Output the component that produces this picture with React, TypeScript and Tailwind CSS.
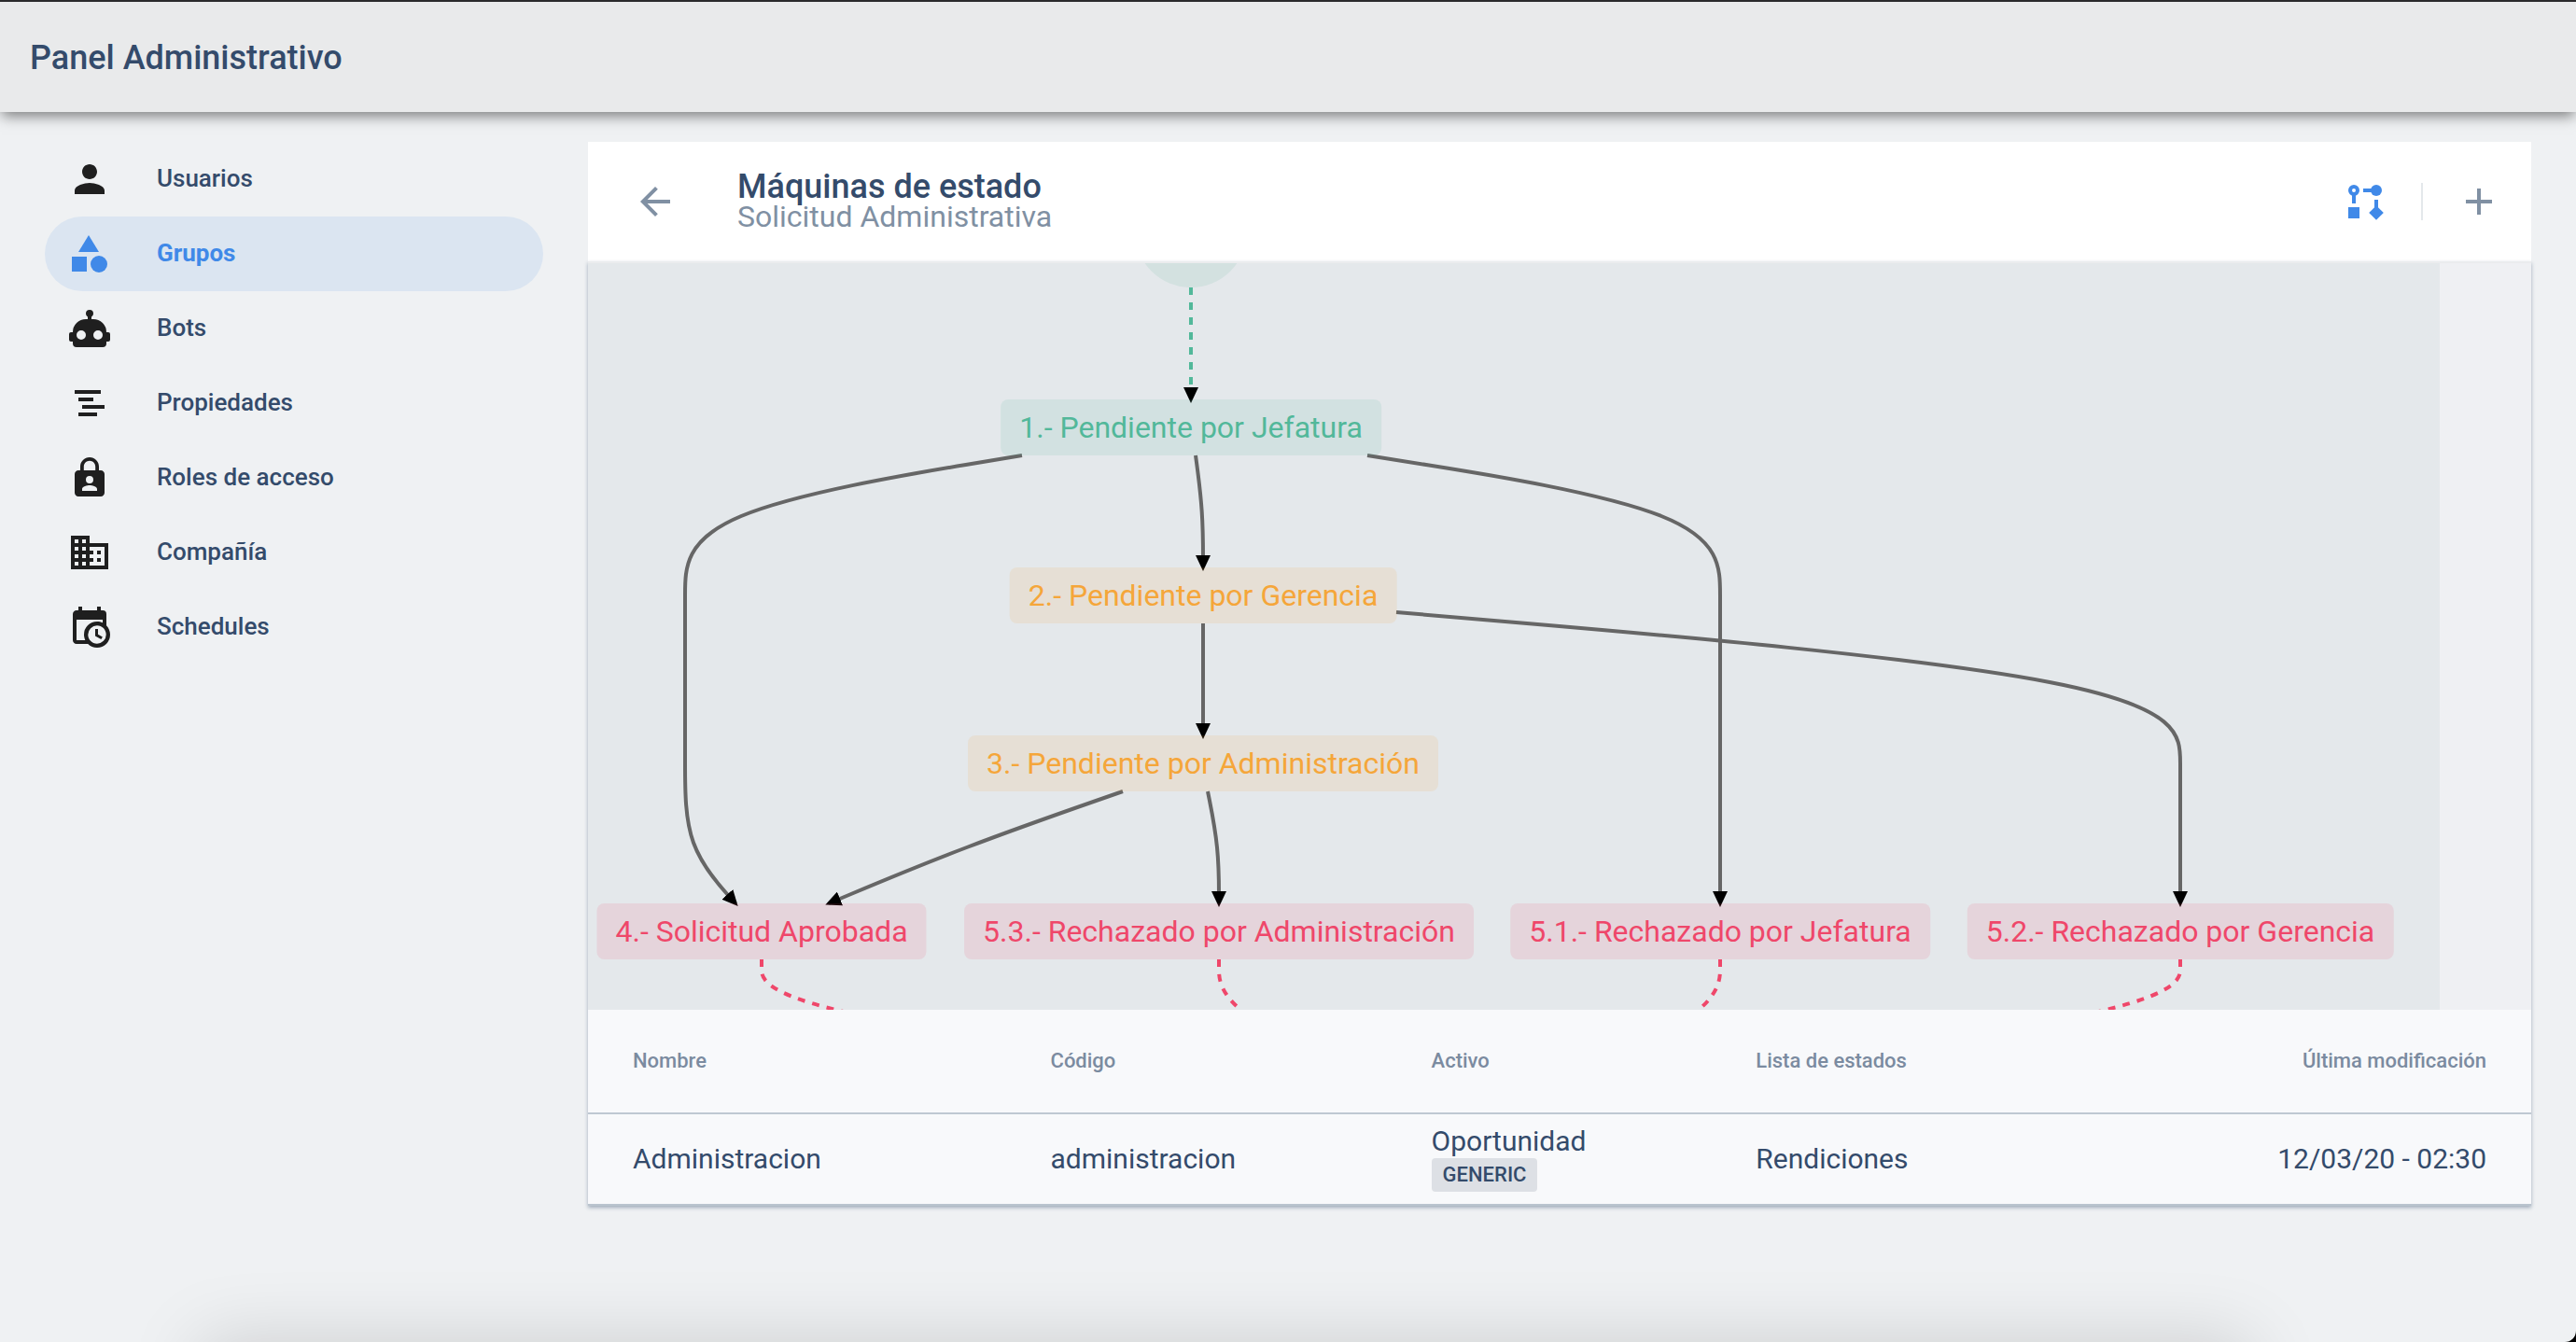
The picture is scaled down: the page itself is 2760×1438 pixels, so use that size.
import React from "react";
import { MdPerson, MdBusiness, MdArrowBack, MdAdd } from "react-icons/md";

type Point = [number, number];

const icon = "size-12 shrink-0";

function ShapesIcon() {
  return (
    <svg viewBox="0.5 0 24 24" className={icon} fill="currentColor" aria-hidden="true">
      <path d="M12 2l5.5 9h-11z" />
      <path d="M3 13.5h8v8H3z" />
      <circle cx="17.5" cy="17.5" r="4.5" />
    </svg>
  );
}

function RobotIcon() {
  return (
    <svg viewBox="0 0 24 24" className={icon} fill="currentColor" aria-hidden="true">
      <path d="M12,2A2,2 0 0,1 14,4C14,4.74 13.6,5.39 13,5.73V7H14A7,7 0 0,1 21,14H22A1,1 0 0,1 23,15V18A1,1 0 0,1 22,19H21V20A2,2 0 0,1 19,22H5A2,2 0 0,1 3,20V19H2A1,1 0 0,1 1,18V15A1,1 0 0,1 2,14H3A7,7 0 0,1 10,7H11V5.73C10.4,5.39 10,4.74 10,4A2,2 0 0,1 12,2M7.5,13A2.5,2.5 0 0,0 5,15.5A2.5,2.5 0 0,0 7.5,18A2.5,2.5 0 0,0 10,15.5A2.5,2.5 0 0,0 7.5,13M16.5,13A2.5,2.5 0 0,0 14,15.5A2.5,2.5 0 0,0 16.5,18A2.5,2.5 0 0,0 19,15.5A2.5,2.5 0 0,0 16.5,13Z" />
    </svg>
  );
}

function BarsIcon() {
  return (
    <svg viewBox="0 0 24 24" className={icon} fill="currentColor" aria-hidden="true">
      <path d="M4 5h14v2H4zM6 9h8v2H6zM8 13h12v2H8zM6 17h10v2H6z" />
    </svg>
  );
}

function LockPersonIcon() {
  return (
    <svg viewBox="0 0 24 24" className={icon} fill="currentColor" fillRule="evenodd" aria-hidden="true">
      <path d="M18 8h-1V6c0-2.76-2.24-5-5-5S7 3.24 7 6v2H6c-1.1 0-2 .9-2 2v10c0 1.1.9 2 2 2h12c1.1 0 2-.9 2-2V10c0-1.1-.9-2-2-2zM8.9 8V6c0-1.71 1.39-3.1 3.1-3.1s3.1 1.39 3.1 3.1v2zM12 11a2 2 0 1 1 0 4a2 2 0 0 1 0-4zM16 19H8v-1c0-1.33 2.67-2 4-2s4 .67 4 2z" />
    </svg>
  );
}

function CalendarClockIcon() {
  return (
    <svg viewBox="0 0 24 24" className={icon} fill="currentColor" aria-hidden="true">
      <path d="M15,13H16.5V15.82L18.94,17.23L18.19,18.53L15,16.69V13M19,8H5V19H9.67C9.24,18.09 9,17.07 9,16A7,7 0 0,1 16,9C17.07,9 18.09,9.24 19,9.67V8M5,21C3.89,21 3,20.1 3,19V5C3,3.89 3.89,3 5,3H6V1H8V3H16V1H18V3H19A2,2 0 0,1 21,5V11.1C22.24,12.36 23,14.09 23,16A7,7 0 0,1 16,23C14.09,23 12.36,22.24 11.1,21H5M16,11.15A4.85,4.85 0 0,0 11.15,16C11.15,18.68 13.32,20.85 16,20.85A4.85,4.85 0 0,0 20.85,16C20.85,13.32 18.68,11.15 16,11.15Z" />
    </svg>
  );
}

function StateMachineIcon() {
  return (
    <svg viewBox="0 0 24 24" className={icon} fill="currentColor" aria-hidden="true">
      <path d="M3 15h6v6H3z" />
      <path d="M18 14.1l3.9 3.9l-3.9 3.9l-3.9-3.9z" />
      <path d="M17 11h2v5h-2zM11 5h5v2h-5zM5 8h2v5H5z" />
      <circle cx="18" cy="6" r="3" />
      <circle cx="6" cy="6" r="2" fill="none" stroke="currentColor" strokeWidth="2" />
    </svg>
  );
}

const navItems = [
  { label: "Usuarios", icon: <MdPerson className={icon} /> },
  { label: "Grupos", icon: <ShapesIcon />, active: true },
  { label: "Bots", icon: <RobotIcon /> },
  { label: "Propiedades", icon: <BarsIcon /> },
  { label: "Roles de acceso", icon: <LockPersonIcon /> },
  { label: "Compañía", icon: <MdBusiness className={icon} /> },
  { label: "Schedules", icon: <CalendarClockIcon /> },
];

const tones = {
  initial: "bg-[#52b89a]/12 text-[#52b89a]",
  pending: "bg-[#f5a63a]/12 text-[#f5a63a]",
  final: "bg-[#ef476a]/12 text-[#ef476a]",
};

/* Node centres and edge waypoints share the canvas' own coordinates. */
const nodes = [
  { label: "1.- Pendiente por Jefatura", x: 646, y: 176, tone: tones.initial },
  { label: "2.- Pendiente por Gerencia", x: 659, y: 356, tone: tones.pending },
  { label: "3.- Pendiente por Administración", x: 659, y: 536, tone: tones.pending },
  { label: "4.- Solicitud Aprobada", x: 186, y: 716, tone: tones.final },
  { label: "5.3.- Rechazado por Administración", x: 676, y: 716, tone: tones.final },
  { label: "5.1.- Rechazado por Jefatura", x: 1213, y: 716, tone: tones.final },
  { label: "5.2.- Rechazado por Gerencia", x: 1706, y: 716, tone: tones.final },
];

const transitions: Point[][] = [
  [[465, 206], [104, 266], [104, 356], [104, 446], [104, 536], [104, 626], [158, 686]],
  [[651, 206], [659, 266], [659, 326]],
  [[835, 206], [1213, 266], [1213, 356], [1213, 446], [1213, 536], [1213, 626], [1213, 686]],
  [[659, 386], [659, 446], [659, 506]],
  [[866, 374], [1706, 446], [1706, 536], [1706, 626], [1706, 686]],
  [[573, 566], [401, 626], [258, 686]],
  [[664, 566], [676, 626], [676, 686]],
];

const closings: Point[][] = [
  [[186, 746], [186, 806], [940, 890]],
  [[676, 746], [676, 806], [897, 890]],
  [[1213, 746], [1213, 806], [995, 890]],
  [[1706, 746], [1706, 806], [952, 890]],
];

/* Uniform B-spline through the waypoints, clamped at both ends. */
function basis(points: Point[]) {
  const mix = (a: Point, wa: number, b: Point, wb: number) =>
    `${(a[0] * wa + b[0] * wb) / (wa + wb)},${(a[1] * wa + b[1] * wb) / (wa + wb)}`;
  const last = points.length - 1;
  let d = `M${points[0]}L${mix(points[0], 5, points[1], 1)}`;
  for (let i = 1; i <= last; i++) {
    const a = points[i - 1];
    const b = points[i];
    const c = points[Math.min(i + 1, last)];
    const end = [0, 1].map((k) => (a[k] + 4 * b[k] + c[k]) / 6);
    d += `C${mix(a, 2, b, 1)} ${mix(a, 1, b, 2)} ${end}`;
  }
  return `${d}L${points[last]}`;
}

function Diagram() {
  return (
    <div className="h-[800px] overflow-hidden bg-[#eff0f3]">
      <div className="relative mr-[98px] h-full bg-[#e4e8eb]">
        <svg className="absolute inset-0 size-full" fill="none" aria-hidden="true">
          <defs>
            <marker id="arrow" viewBox="0 0 17 16" refX="13" refY="8" markerWidth="17" markerHeight="16" markerUnits="userSpaceOnUse" orient="auto">
              <path d="M0 0L17 8L0 16z" fill="#000" />
            </marker>
          </defs>
          <circle cx="646" cy="-34" r="60" fill="#d3e1e0" />
          <path d="M646 26V146" stroke="#52b89a" strokeWidth="4" strokeDasharray="8 8" markerEnd="url(#arrow)" />
          {transitions.map((points, i) => (
            <path key={i} d={basis(points)} stroke="#666" strokeWidth="4" markerEnd="url(#arrow)" />
          ))}
          {closings.map((points, i) => (
            <path key={i} d={basis(points)} stroke="#ef476a" strokeWidth="4" strokeDasharray="8 8" />
          ))}
        </svg>
        {nodes.map((n) => (
          <div
            key={n.label}
            className={`absolute flex h-[60px] -translate-x-1/2 -translate-y-1/2 items-center rounded-lg px-5 text-[32px] whitespace-nowrap ${n.tone}`}
            style={{ left: n.x, top: n.y }}
          >
            {n.label}
          </div>
        ))}
      </div>
    </div>
  );
}

export default function App() {
  return (
    <div className="bg-black">
      <div className="relative flex min-h-screen flex-col overflow-hidden rounded-br-xl bg-[#eff1f3] font-[Roboto,sans-serif] text-[#344b6b]">
        <header className="flex h-[120px] items-center border-t-2 border-[#2a2a2c] bg-[#e9eaeb] px-8 pt-0.5 shadow-[0_6px_14px_-2px_rgba(0,0,0,0.5)]">
          <h1 className="text-[36px] font-medium">Panel Administrativo</h1>
        </header>

        <div className="flex items-start py-8">
          <nav className="flex w-[630px] shrink-0 flex-col px-12">
            {navItems.map((item) => (
              <a
                key={item.label}
                href="#"
                aria-current={item.active ? "page" : undefined}
                className={`flex h-20 items-center gap-12 rounded-full px-6 text-[26px] ${
                  item.active ? "bg-[#dbe5f1] font-bold text-[#4089e8]" : "font-medium"
                }`}
              >
                <span className={item.active ? "" : "text-[#1f1f1f]"}>{item.icon}</span>
                <span className="pb-0.5">{item.label}</span>
              </a>
            ))}
          </nav>

          <main className="mr-12 min-w-0 flex-1">
            <div className="flex h-32 items-center bg-white pr-8 pl-12 text-[#8090a3]">
              <button type="button" aria-label="Volver" className="mr-16">
                <MdArrowBack className={icon} />
              </button>
              <div className="flex-1">
                <h2 className="text-[36px] leading-8 font-medium text-[#344b6b]">Máquinas de estado</h2>
                <p className="text-[32px] leading-8">Solicitud Administrativa</p>
              </div>
              <button type="button" aria-label="Diagrama de estados" className="text-[#4089e8]">
                <StateMachineIcon />
              </button>
              <div className="mx-9 h-10 w-0.5 bg-[#e4e8eb]" />
              <button type="button" aria-label="Agregar">
                <MdAdd className={icon} />
              </button>
            </div>

            <div className="border-t-2 border-[#ebecee] shadow-[0_2px_4px_rgba(60,85,115,0.45)]">
              <Diagram />
              <table className="w-full table-fixed bg-[#f8f9fb] text-left">
                <colgroup>
                  <col className="w-[23.8%]" />
                  <col className="w-[19.6%]" />
                  <col className="w-[16.7%]" />
                  <col className="w-[18%]" />
                  <col />
                </colgroup>
                <thead>
                  <tr className="h-[111px] border-b-2 border-[#bfc8d2] text-[22px] text-[#7b8ba0]">
                    <th scope="col" className="pb-0.5 pl-12 font-medium">Nombre</th>
                    <th scope="col" className="pb-0.5 font-medium">Código</th>
                    <th scope="col" className="pb-0.5 font-medium">Activo</th>
                    <th scope="col" className="pb-0.5 font-medium">Lista de estados</th>
                    <th scope="col" className="pr-12 pb-0.5 text-right font-medium">Última modificación</th>
                  </tr>
                </thead>
                <tbody>
                  <tr className="h-[98px] border-b-2 border-[#bac4ce] text-[30px]">
                    <td className="pb-0.5 pl-12">Administracion</td>
                    <td className="pb-0.5">administracion</td>
                    <td className="pb-0.5">
                      <div className="leading-9">Oportunidad</div>
                      <div className="flex">
                        <span className="rounded bg-[#dde0e5] px-3 text-[22px] leading-9 font-medium">GENERIC</span>
                      </div>
                    </td>
                    <td className="pb-0.5">Rendiciones</td>
                    <td className="pr-12 pb-0.5 text-right">12/03/20 - 02:30</td>
                  </tr>
                </tbody>
              </table>
            </div>
          </main>
        </div>

        <div className="pointer-events-none absolute top-full right-[350px] left-[215px] h-24 shadow-[0_0_80px_rgba(0,0,0,0.15)]" />
      </div>
    </div>
  );
}
